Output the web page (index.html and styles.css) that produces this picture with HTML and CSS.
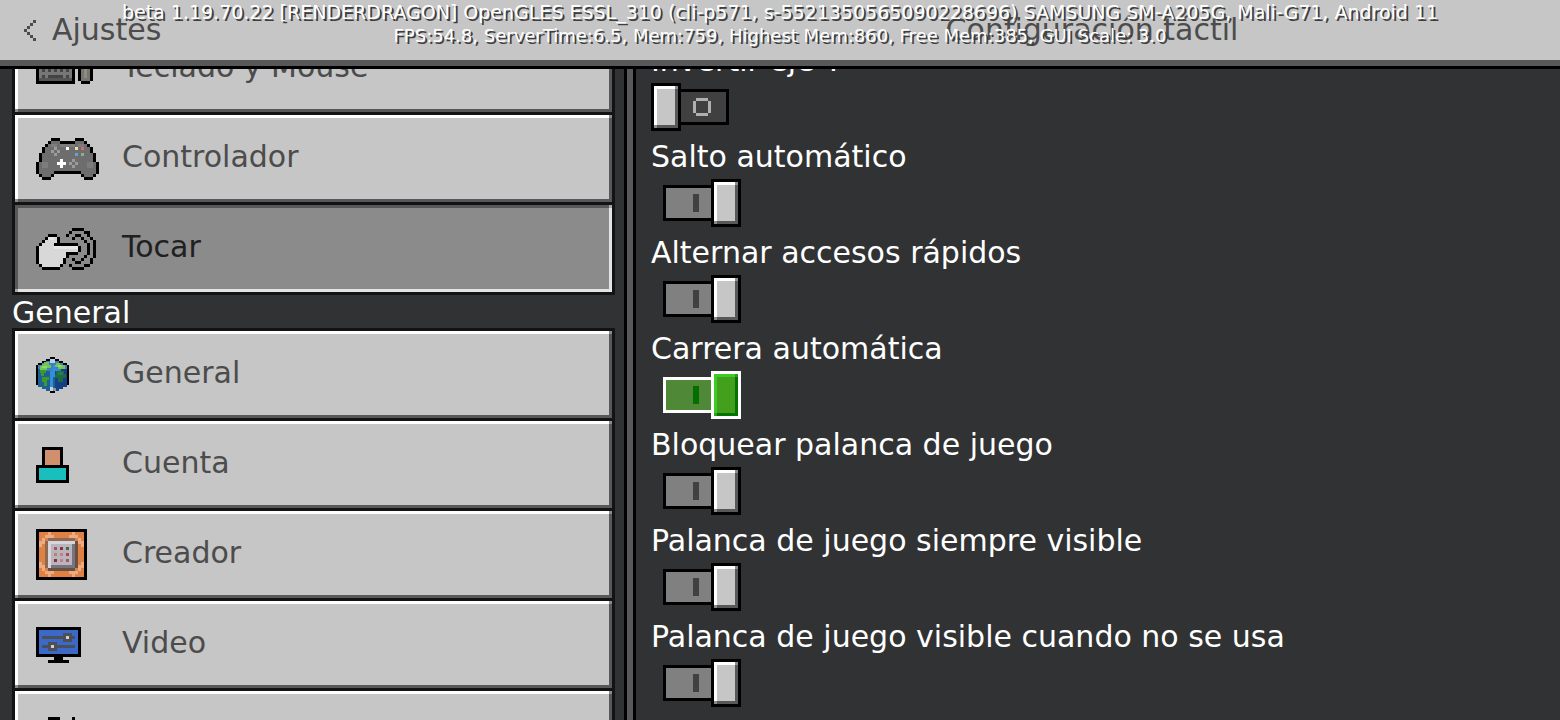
FILE: index.html
```
<!DOCTYPE html>
<html lang="es">
<head>
    <meta charset="UTF-8">
    <meta name="viewport" content="width=device-width, initial-scale=1.0">
    <title>Ajustes</title>
    <link rel="stylesheet" href="styles.css">
</head>
<body>

    <!-- Debug overlay -->
    <div class="debug">
        <div>beta 1.19.70.22 [RENDERDRAGON] OpenGLES ESSL_310 (cli-p571, s-5521350565090228696) SAMSUNG SM-A205G, Mali-G71, Android 11</div>
        <div class="stats">FPS:54.8, ServerTime:6.5, Mem:759, Highest Mem:860, Free Mem:385, GUI Scale: 3.0</div>
    </div>

    <!-- Top bar -->
    <header class="topbar">
        <button class="back" type="button">
            <svg width="12" height="21" viewBox="0 0 4 7" shape-rendering="crispEdges"><path fill="#4c4c4c" d="M3 0h1v1h-1zM2 1h1v1h-1zM1 2h1v1h-1zM0 3h1v1h-1zM1 4h1v1h-1zM2 5h1v1h-1zM3 6h1v1h-1z"/></svg>
            Ajustes
        </button>
        <h1>Configuración táctil</h1>
    </header>

    <main class="panes">

        <!-- Section list -->
        <nav class="sidebar">
            <div class="menu">
                <button class="item" type="button">
                    <svg width="57" height="30" viewBox="0 0 19 10" shape-rendering="crispEdges">
                        <path d="M0 0h13v10H0zM15 0h3v1h1v8h-1v1h-3V9h-1V1h1z"/>
                        <path fill="#777" d="M1 1h11v7H1z"/>
                        <path fill="#555" d="M1 8h11v1H1z"/>
                        <path fill="#444" d="M2 5h1v1H2zM4 5h1v1H4zM6 5h1v1H6zM8 5h1v1H8zM10 5h1v1h-1zM2 7h1v1H2zM4 7h5v1H4zM10 7h1v1h-1z"/>
                        <path fill="#77756f" d="M15 1h3v8h-3z"/>
                        <path fill="#908c84" d="M16 5h1v3h-1z"/>
                    </svg>
                    <span>Teclado y Mouse</span>
                </button>
                <button class="item" type="button">
                    <svg width="63" height="42" viewBox="0 0 21 14" shape-rendering="crispEdges">
                        <path d="M5 0h3v1h5V0h3v1h1v1h1v1h1v2h1v3h1v4h-1v1h-1v1h-3v-1h-1v-1H6v1H5v1H2v-1H1v-1H0V8h1V5h1V3h1V2h1V1h1z"/>
                        <path fill="#6d6d6d" d="M5 1h3v1h5V1h3v1h1v1h1v2h1v3h1v4h-1v1h-3v-1h-1v-1H6v1H5v1H2v-1H1V8h1V5h1V3h1V2h1z"/>
                        <path fill="#7c7c7c" d="M5 2h2v1H5zM8 2h5v1H8zM14 2h2v1h-2zM2 8h2v2H2zM17 8h2v2h-2z"/>
                        <path fill="#9b9b9b" d="M6 3h1v1H6zM5 4h1v1H5zM7 4h1v1H7zM6 5h1v1H6zM12 7h1v1h-1zM11 8h1v1h-1zM13 8h1v1h-1zM12 9h1v1h-1z"/>
                        <path fill="#fff" d="M10 3h1v1h-1zM8 7h1v1h1v1H9v1H8V9H7V8h1z"/>
                        <path fill="#ede39b" d="M13 3h1v1h-1z"/>
                        <path fill="#d5667c" d="M15 3h1v1h-1z"/>
                        <path fill="#5aa7d6" d="M13 5h1v1h-1z"/>
                        <path fill="#8cb27b" d="M15 5h1v1h-1z"/>
                    </svg>
                    <span>Controlador</span>
                </button>
                <button class="item selected" type="button">
                    <svg width="60" height="42" viewBox="0 0 20 14" shape-rendering="crispEdges">
                        <path fill="#d8d8d8" d="M4 3h3v2H6v1h8v2h-4v2H9v2H8v1H2v-1H1V6h1V4h2z"/>
                        <path fill="#e8e8e8" d="M4 3h2v1H4zM6 6h8v1H6z"/>
                        <g fill="none" stroke="#000" transform="translate(0 .5)">
                            <path d="M12 0h4M11 1h1M16 1h2M4 2h3M10 2h1M13 2h2M17 2h1M3 3h1M7 3h1M12 3h1M15 3h1M18 3h1M2 4h1M7 4h1M16 4h1M19 4h1M1 5h1M6 5h8M17 5h1M19 5h1M0 6h1M14 6h1M17 6h1M19 6h1M0 7h1M14 7h1M17 7h1M19 7h1M0 8h1M10 8h4M17 8h1M19 8h1M0 9h1M10 9h1M16 9h1M19 9h1M0 10h1M9 10h1M12 10h1M15 10h1M18 10h1M0 11h1M9 11h1M13 11h2M18 11h1M1 12h1M8 12h1M11 12h1M16 12h2M2 13h6M12 13h4"/>
                        </g>
                    </svg>
                    <span>Tocar</span>
                </button>
            </div>

            <h2>General</h2>

            <div class="menu">
                <button class="item" type="button">
                    <svg width="33" height="36" viewBox="0 0 33 36" shape-rendering="crispEdges">
                        <path d="M14 0h5v2h4v2h4v2h4v2h2v20h-2v2h-4v2h-4v2h-4v2h-5v-2h-4v-2H6v-2H2v-2H0V8h2V6h4V4h4V2h4z"/>
                        <path fill="#3f7fc0" d="M14 2h5v2h4v2h4v2h4v4h-6v2h-6v2h-5v-2H8v-2H2V8h4V6h4V4h4z"/>
                        <path fill="#205f92" d="M2 12h6v2h6v20h-4v-2H6v-2H2z"/>
                        <path fill="#153f86" d="M31 12h-6v2h-6v20h4v-2h4v-2h4z"/>
                        <path fill="#205f92" d="M14 14h5v20h-5z"/>
                        <path fill="#2f8fd8" d="M14 14h5v6h-2v10h-3z"/>
                        <path fill="#b9d1e8" d="M14 2h5v4h-5z"/>
                        <path fill="#71c458" d="M8 5h5v3h2v3h-4v2H4V9h2V7h2zM20 6h4v2h5v4h-7v-2h-3V8h1z"/>
                        <path fill="#8fd96a" d="M6 9h5v2H6zM22 8h4v2h-4z"/>
                        <path fill="#3b9a2e" d="M4 13h6v3H8v3H5v-3H4zM6 20h7v3h-2v6H8v-4H6z"/>
                        <path fill="#1d6b46" d="M20 14h8v3h2v4h-3v4h-5v-4h-3v-4h1z"/>
                        <path fill="#277f4b" d="M22 15h5v3h-5z"/>
                        <path fill="#2f8fd8" d="M16 12h6v2h-6zM17 8h2v4h-2z"/>
                        <path fill="#c8d2dc" d="M14 30h3v4h-3z"/>
                        <path fill="#8c96a2" d="M17 31h3v3h-3z"/>
                    </svg>
                    <span>General</span>
                </button>
                <button class="item" type="button">
                    <svg width="33" height="36" viewBox="0 0 11 12" shape-rendering="crispEdges">
                        <path d="M2 0h7v6h2v6H0V6h2z"/>
                        <path fill="#d1906c" d="M3 1h5v5H3z"/>
                        <path fill="#18bfbc" d="M1 7h9v4H1z"/>
                    </svg>
                    <span>Cuenta</span>
                </button>
                <button class="item" type="button">
                    <svg width="51" height="51" viewBox="0 0 17 17" shape-rendering="crispEdges">
                        <path d="M0 0h17v17H0z"/>
                        <path fill="#df8144" d="M1 1h15v15H1z"/>
                        <path fill="#ecab82" d="M4 1h1v1h1v1H3v2H2v1H1V4h1V3h1V2h1zM12 1h1v1h1v1h1v1h1v2h-1V5h-1V3h-3V2h1zM1 11h1v1h1v2h3v1H5v1H4v-1H3v-1H2v-1H1zM15 11h1v2h-1v1h-1v1h-1v1h-1v-1h-1v-1h3v-2h1z"/>
                        <path fill="#6c503e" d="M3 4h1V3h9v1h1v9h-1v1H4v-1H3z"/>
                        <path fill="#8c6a54" d="M4 3h9v1H4zM3 4h1v9H3z"/>
                        <path fill="#d9d5dc" d="M4 4h9v9H4z"/>
                        <path fill="#777482" d="M12 5h1v8H5v-1h7z"/>
                        <path fill="#b9b4c0" d="M5 5h7v7H5z"/>
                        <path fill="#a45757" d="M6 6h1v1H6zM10 10h1v1h-1z"/>
                        <path fill="#8d2f32" d="M8 6h1v1H8zM6 10h1v1H6z"/>
                        <path fill="#44693a" d="M10 6h1v1h-1z"/>
                        <path fill="#b58b4f" d="M6 8h1v1H6z"/>
                        <path fill="#c77f7f" d="M8 8h1v1H8zM8 10h1v1H8z"/>
                        <path fill="#b64444" d="M10 8h1v1h-1z"/>
                    </svg>
                    <span>Creador</span>
                </button>
                <button class="item" type="button">
                    <svg width="45" height="36" viewBox="0 0 15 12" shape-rendering="crispEdges">
                        <path d="M0 0h15v10H9v1h2v1H4v-1h2v-1H0z"/>
                        <path fill="#3b69ca" d="M1 1h13v8H1z"/>
                        <path fill="#4c4f55" d="M2 3h7V2h3v1h1v1h-1v1H9V4H2zM2 6h2V5h3v1h6v1H7v1H4V7H2z"/>
                        <path fill="#d0d0d0" d="M10 3h1v1h-1zM5 6h1v1H5z"/>
                    </svg>
                    <span>Video</span>
                </button>
                <button class="item" type="button">
                    <svg width="45" height="36" viewBox="0 0 15 12" shape-rendering="crispEdges">
                        <path d="M4 0h4v12H6v-1H5v-1H4V9H0V3h2V2h1V1h1zM12 0h1v1h1v1h1v8h-1v1h-1v1h-1v-1h1v-1h1V2h-1V1h-1z"/>
                        <path fill="#a98658" d="M5 1h2v9H6V9H5z"/>
                    </svg>
                </button>
            </div>
        </nav>

        <!-- Touch options -->
        <section class="options">
            <div class="option">
                <label for="invertY">Invertir eje Y</label>
                <input class="toggle" type="checkbox" id="invertY">
            </div>
            <div class="option">
                <label for="autoJump">Salto automático</label>
                <input class="toggle" type="checkbox" id="autoJump" checked>
            </div>
            <div class="option">
                <label for="hotbarSwap">Alternar accesos rápidos</label>
                <input class="toggle" type="checkbox" id="hotbarSwap" checked>
            </div>
            <div class="option">
                <label for="autoRun">Carrera automática</label>
                <input class="toggle active" type="checkbox" id="autoRun" checked>
            </div>
            <div class="option">
                <label for="lockStick">Bloquear palanca de juego</label>
                <input class="toggle" type="checkbox" id="lockStick" checked>
            </div>
            <div class="option">
                <label for="stickVisible">Palanca de juego siempre visible</label>
                <input class="toggle" type="checkbox" id="stickVisible" checked>
            </div>
            <div class="option">
                <label for="stickIdle">Palanca de juego visible cuando no se usa</label>
                <input class="toggle" type="checkbox" id="stickIdle" checked>
            </div>
        </section>

    </main>

</body>
</html>
```
FILE: styles.css
```
*,
*::before,
*::after {
    box-sizing: border-box;
}

body {
    margin: 0;
    height: 100vh;
    display: flex;
    flex-direction: column;
    overflow: hidden;
    background-color: #313233;
    font-family: "DejaVu Sans", sans-serif;
    font-size: 30px;
    line-height: 36px;
    color: #fff;
}

button {
    font: inherit;
    text-align: left;
    cursor: pointer;
}

svg {
    display: block;
    flex: none;
}

/* Debug overlay */
.debug {
    position: absolute;
    top: 0;
    left: 0;
    right: 0;
    z-index: 2;
    font-size: 19px;
    line-height: 24px;
    text-align: center;
    white-space: nowrap;
    text-shadow: 2px 2px #3e3e3e;
    pointer-events: none;
}

.debug .stats {
    font-size: 18px;
}

/* Top bar */
.topbar {
    flex: none;
    display: grid;
    grid-template-columns: 2fr 3fr;
    align-items: center;
    height: 69px;
    background-color: #c6c6c6;
    border-bottom: 3px solid #000;
    box-shadow: inset 0 -6px #58585a;
    padding-bottom: 6px;
    color: #4c4c4c;
}

.back {
    display: flex;
    align-items: center;
    gap: 16px;
    padding: 0 24px;
    border: none;
    background: none;
    color: #4c4c4c;
}

h1 {
    margin: 0;
    font-size: 30px;
    font-weight: normal;
    text-align: center;
}

/* Panes */
.panes {
    flex: 1;
    min-height: 0;
    display: grid;
    grid-template-columns: 2fr 3fr;
}

.sidebar,
.options {
    overflow: hidden;
}

.sidebar {
    padding: 0 9px 0 12px;
}

.sidebar .menu:first-child {
    margin-top: -47px;
}

.menu {
    border: 3px solid #131313;
    display: flex;
    flex-direction: column;
    gap: 3px;
    background-color: #131313;
}

h2 {
    margin: 0;
    height: 33px;
    font-size: 30px;
    font-weight: normal;
}

/* Bevelled boxes share their light and dark edges */
.item,
.toggle::after {
    --face: #c6c6c6;
    --light: #fff;
    --dark: #58585a;
    --corner: #8b8b8b;
    background:
        linear-gradient(var(--corner) 0 0) left bottom / 3px 3px no-repeat,
        linear-gradient(var(--corner) 0 0) right top / 3px 3px no-repeat,
        linear-gradient(var(--light) 0 0) left top / 100% 3px no-repeat,
        linear-gradient(var(--light) 0 0) left top / 3px 100% no-repeat,
        linear-gradient(var(--dark) 0 0) left bottom / 100% 3px no-repeat,
        linear-gradient(var(--dark) 0 0) right top / 3px 100% no-repeat,
        var(--face);
}

.item {
    display: grid;
    grid-template-columns: 86px 1fr;
    align-items: center;
    height: 87px;
    padding: 0 21px;
    border: none;
    color: #4c4c4c;
}

.item span {
    padding-bottom: 3px;
}

.item.selected {
    --face: #8b8b8b;
    --light: #58585a;
    --dark: #e3e3e3;
    --corner: #a8a8a8;
    color: #202020;
}

/* Options */
.options {
    border-left: 3px solid #000;
    box-shadow: inset 6px 0 #58585a, inset 9px 0 #000;
    padding-left: 24px;
}

.option:first-child {
    margin-top: -27px;
}

.option {
    height: 96px;
}

.option label {
    display: block;
    height: 41px;
    line-height: 38px;
}

/* Toggle switch */
.toggle {
    appearance: none;
    display: block;
    position: relative;
    width: 90px;
    height: 48px;
    margin: 0;
    cursor: pointer;
    --edge: #000;
    --track: #404040;
    --mark: #b0b0b0;
}

.toggle::before {
    content: "";
    position: absolute;
    top: 6px;
    left: 12px;
    width: 66px;
    height: 36px;
    border: 3px solid var(--edge);
    background:
        linear-gradient(var(--mark) 0 0) 30px 6px / 12px 3px no-repeat,
        linear-gradient(var(--mark) 0 0) 30px 21px / 12px 3px no-repeat,
        linear-gradient(var(--mark) 0 0) 27px 9px / 3px 12px no-repeat,
        linear-gradient(var(--mark) 0 0) 42px 9px / 3px 12px no-repeat,
        var(--track);
}

.toggle::after {
    content: "";
    position: absolute;
    top: 0;
    left: 0;
    width: 30px;
    height: 48px;
    border: 3px solid var(--edge);
}

.toggle:checked {
    --track: #808080;
    --mark: #414141;
}

.toggle:checked::before {
    background: linear-gradient(var(--mark) 0 0) 27px 6px / 6px 18px no-repeat, var(--track);
}

.toggle:checked::after {
    left: 60px;
}

.toggle.active {
    --edge: #fff;
    --track: #4f8938;
    --mark: #046e00;
}

.toggle.active::after {
    --face: #43a01c;
    --light: #3ecb2a;
    --dark: #047300;
    --corner: #3a9620;
}
```
